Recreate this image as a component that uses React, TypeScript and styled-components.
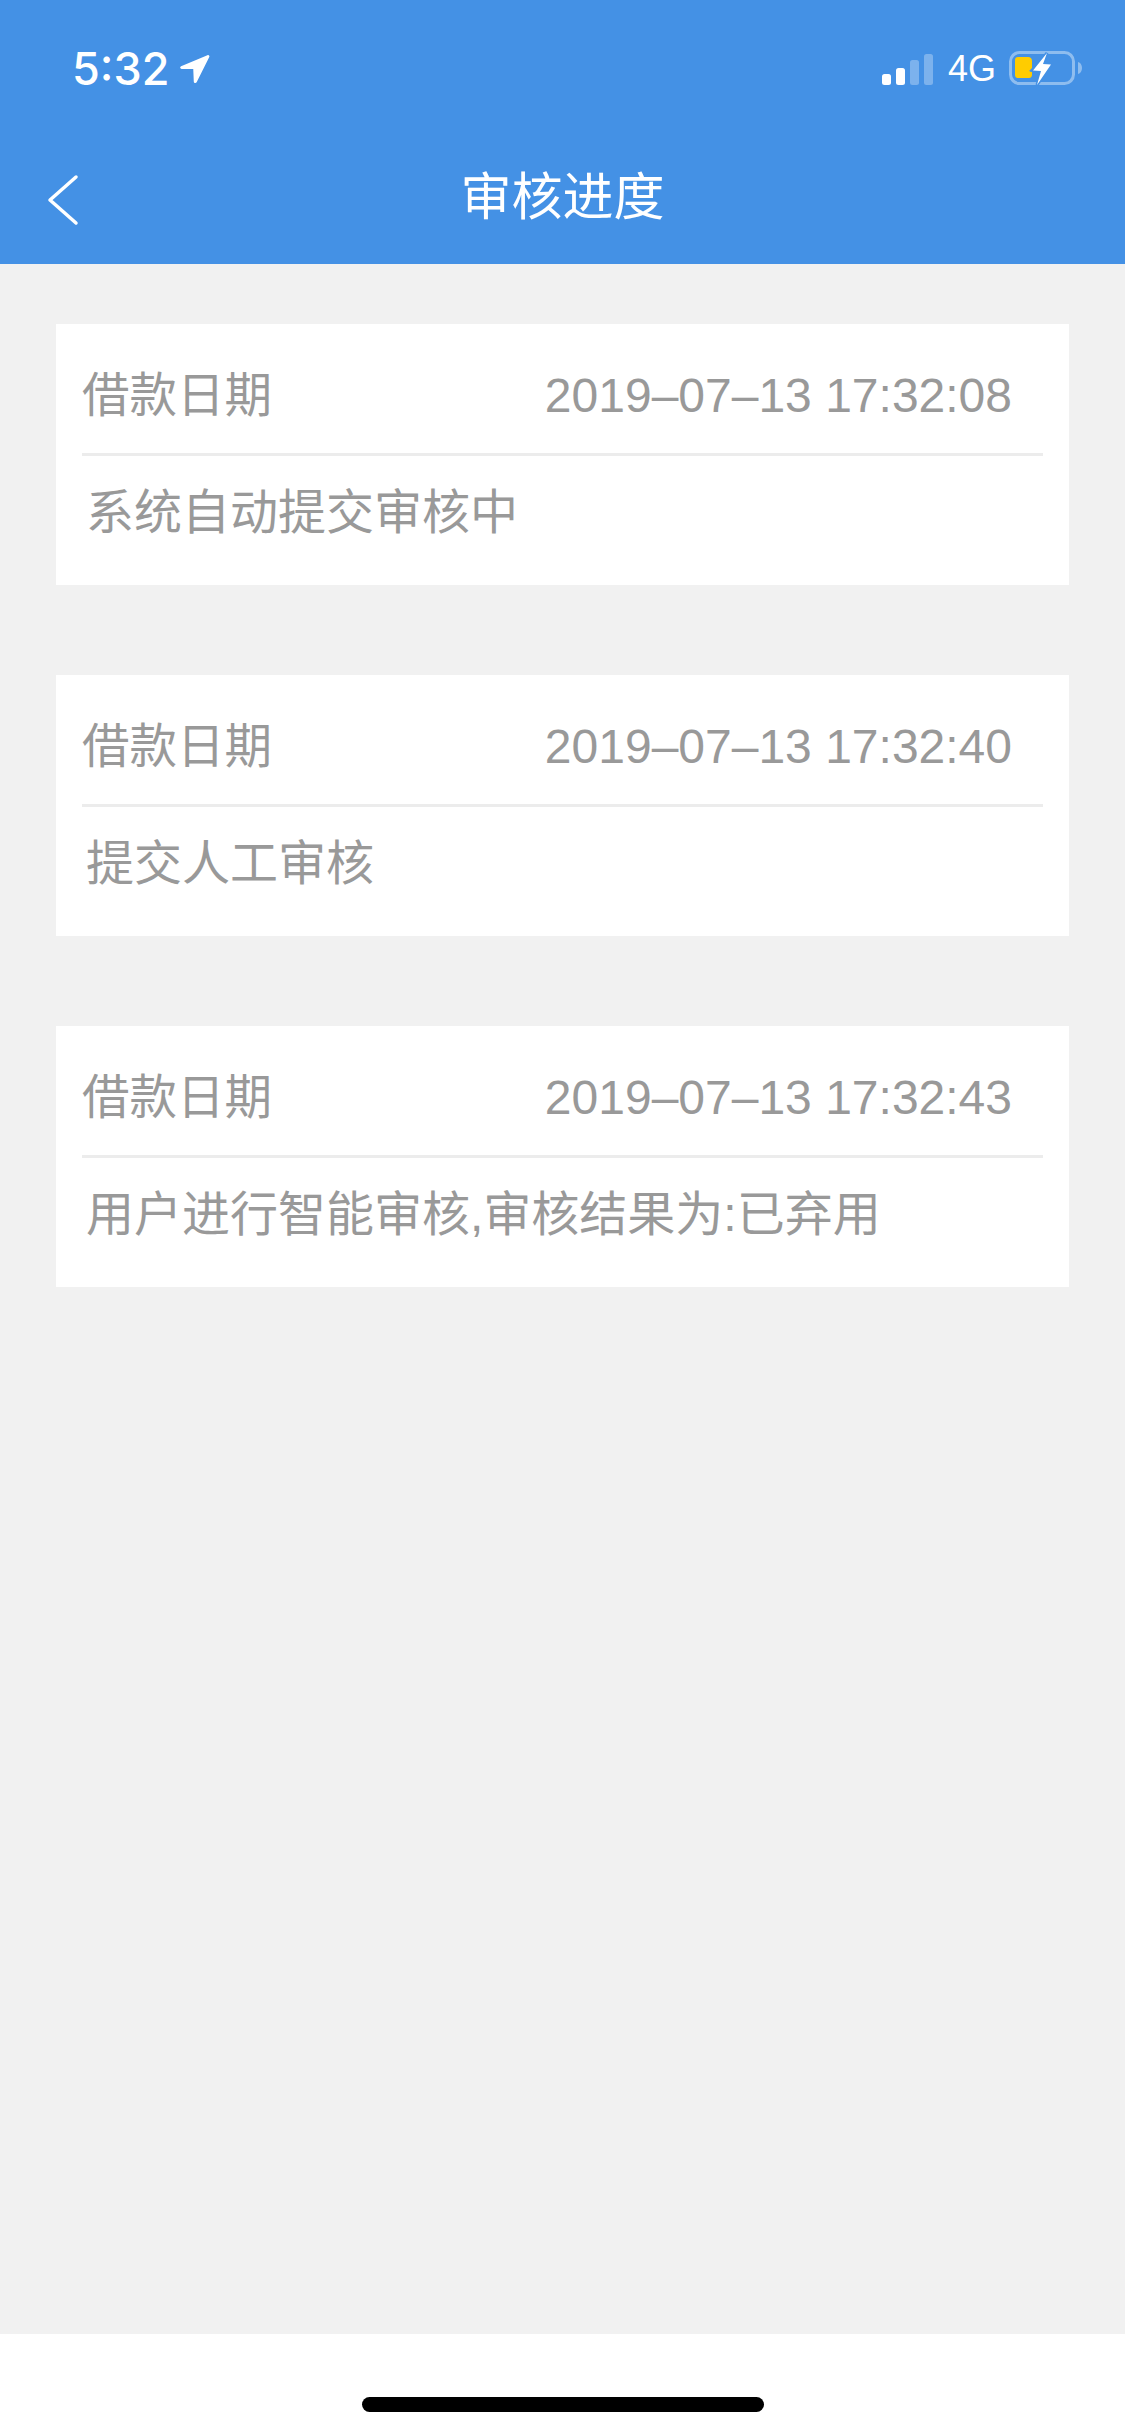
import React from 'react';
import styled, { createGlobalStyle } from 'styled-components';

const GlobalStyle = createGlobalStyle`
  html, body {
    margin: 0;
    padding: 0;
    background: #f1f1f1;
  }
`;

const records = [
  { time: '2019–07–13 17:32:08', status: '系统自动提交审核中' },
  { time: '2019–07–13 17:32:40', status: '提交人工审核' },
  { time: '2019–07–13 17:32:43', status: '用户进行智能审核,审核结果为:已弃用' },
];

const App = () => (
  <Page>
    <GlobalStyle />
    <Header>
      <StatusBar>
        <TimeGroup>
          <Clock>5:32</Clock>
          <LocationIcon viewBox="0 0 30 30">
            <path d="M27.500 1.200 2 11.800c-1.500.7-1 2.600.6 2.600l11.200.2.5 12c.1 1.700 2.200 2 2.900.5L29.300 3c.6-1.200-.6-2.400-1.800-1.800Z" fill="#fff" />
          </LocationIcon>
        </TimeGroup>
        <StatusIcons>
          <SignalIcon viewBox="0 0 51 31">
            <rect x="0" y="20" width="9" height="11" rx="2.500" fill="#fff" />
            <rect x="14" y="14" width="9" height="17" rx="2.500" fill="#fff" />
            <rect x="28" y="6" width="9" height="25" rx="2.500" fill="#fff" opacity="0.3" />
            <rect x="42" y="0" width="9" height="31" rx="2.500" fill="#fff" opacity="0.3" />
          </SignalIcon>
          <Network>4G</Network>
          <BatteryIcon viewBox="0 0 74 36">
            <rect x="1.500" y="1.500" width="63" height="31" rx="9" fill="none" stroke="#fff" strokeWidth="3" opacity="0.4" />
            <path d="M69 11c2.500.6 4 3 4 6s-1.500 5.400-4 6Z" fill="#fff" opacity="0.4" />
            <path d="M9 6h10c2.500 0 4 1.500 4 4v7l-3 3 3 1v3c0 1.500-1 3-3 3H9c-2 0-3-1-3-3V9c0-2 1-3 3-3Z" fill="#ffcc00" />
            <path d="M38 2 24 19.500l8 .5-4 14 14-20.500-8-.5 4-11Z" fill="#fff" stroke="#4491e5" strokeWidth="3" paintOrder="stroke" />
          </BatteryIcon>
        </StatusIcons>
      </StatusBar>
      <NavBar>
        <BackIcon viewBox="0 0 32 52">
          <path d="M29 3 3 26l26 23" fill="none" stroke="#fff" strokeWidth="3.500" strokeLinecap="round" strokeLinejoin="round" />
        </BackIcon>
        <Title>审核进度</Title>
      </NavBar>
    </Header>
    <Content>
      {records.map((record) => (
        <Card key={record.time}>
          <CardHead>
            <Label>借款日期</Label>
            <Time>{record.time}</Time>
          </CardHead>
          <Status>{record.status}</Status>
        </Card>
      ))}
    </Content>
    <HomeArea>
      <HomeIndicator />
    </HomeArea>
  </Page>
);

const cjk = `"Liberation Sans", "Noto Sans CJK SC", sans-serif`;

const Page = styled.div`
  display: flex;
  flex-direction: column;
  width: 1125px;
  height: 2436px;
  overflow: hidden;
  background: #f1f1f1;
  font-family: ${cjk};
`;

const Header = styled.header`
  display: flex;
  flex-direction: column;
  height: 264px;
  background: #4491e5;
  color: #fff;
`;

const StatusBar = styled.div`
  display: flex;
  align-items: flex-start;
  justify-content: space-between;
  height: 132px;
  padding: 51px 42px 0 72px;
  box-sizing: border-box;
`;

const TimeGroup = styled.div`
  display: flex;
  align-items: center;
  gap: 10px;
  height: 36px;
`;

const Clock = styled.span`
  font-family: Inter, sans-serif;
  font-size: 45px;
  line-height: 36px;
  font-weight: 500;
`;

const LocationIcon = styled.svg`
  width: 31px;
  height: 31px;
`;

const StatusIcons = styled.div`
  display: flex;
  align-items: center;
  height: 36px;
`;

const SignalIcon = styled.svg`
  width: 51px;
  height: 31px;
`;

const Network = styled.span`
  margin-left: 15px;
  font-family: "Liberation Sans", sans-serif;
  font-size: 36px;
  line-height: 36px;
`;

const BatteryIcon = styled.svg`
  width: 74px;
  height: 36px;
  margin-left: 13px;
`;

const NavBar = styled.div`
  display: flex;
  align-items: center;
  justify-content: center;
  position: relative;
  height: 132px;
`;

const BackIcon = styled.svg`
  position: absolute;
  left: 47px;
  top: 42px;
  width: 32px;
  height: 52px;
`;

const Title = styled.h1`
  margin: 0;
  font-size: 51px;
  line-height: 60px;
  font-weight: 400;
  color: #fff;
`;

const Content = styled.main`
  flex: 1;
  display: flex;
  flex-direction: column;
  gap: 90px;
  padding: 60px 56px 0;
`;

const Card = styled.section`
  height: 261px;
  padding: 0 26px;
  box-sizing: border-box;
  background: #fff;
`;

const CardHead = styled.div`
  display: flex;
  align-items: center;
  justify-content: space-between;
  height: 123px;
  padding-top: 6px;
  padding-right: 31px;
  box-sizing: content-box;
  border-bottom: 3px solid #ececec;
  color: #999;
`;

const Label = styled.span`
  font-size: 47.500px;
  font-weight: 400;
`;

const Time = styled.span`
  margin-top: 8px;
  font-family: "Liberation Sans", sans-serif;
  font-size: 48px;
`;

const Status = styled.div`
  padding-left: 4px;
  font-size: 48px;
  font-weight: 400;
  line-height: 114px;
  color: #999;
`;

const HomeArea = styled.footer`
  display: flex;
  justify-content: center;
  height: 102px;
  padding-top: 63px;
  box-sizing: border-box;
  background: #fff;
`;

const HomeIndicator = styled.div`
  width: 402px;
  height: 15px;
  border-radius: 8px;
  background: #000;
`;

export default App;
